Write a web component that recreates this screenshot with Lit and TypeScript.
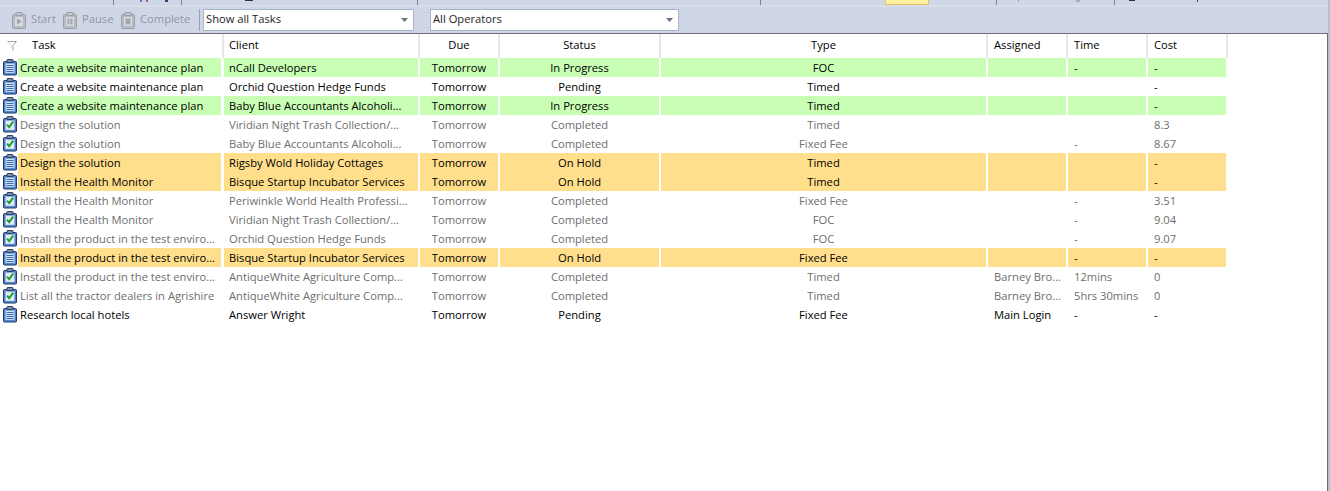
import { LitElement, html, css, svg } from "lit";
import { customElement } from "lit/decorators.js";

type Row = [string, string, string, string, string, string, string, string, string];
// tone, task, client, due, status, type, assigned, time, cost
const rows: Row[] = [
  ["g", "Create a website maintenance plan", "nCall Developers", "Tomorrow", "In Progress", "FOC", "", "-", "-"],
  ["n", "Create a website maintenance plan", "Orchid Question Hedge Funds", "Tomorrow", "Pending", "Timed", "", "", "-"],
  ["g", "Create a website maintenance plan", "Baby Blue Accountants Alcoholi...", "Tomorrow", "In Progress", "Timed", "", "", "-"],
  ["d", "Design the solution", "Viridian Night Trash Collection/...", "Tomorrow", "Completed", "Timed", "", "", "8.3"],
  ["d", "Design the solution", "Baby Blue Accountants Alcoholi...", "Tomorrow", "Completed", "Fixed Fee", "", "-", "8.67"],
  ["o", "Design the solution", "Rigsby Wold Holiday Cottages", "Tomorrow", "On Hold", "Timed", "", "", "-"],
  ["o", "Install the Health Monitor", "Bisque Startup Incubator Services", "Tomorrow", "On Hold", "Timed", "", "", "-"],
  ["d", "Install the Health Monitor", "Periwinkle World Health Professi...", "Tomorrow", "Completed", "Fixed Fee", "", "-", "3.51"],
  ["d", "Install the Health Monitor", "Viridian Night Trash Collection/...", "Tomorrow", "Completed", "FOC", "", "-", "9.04"],
  ["d", "Install the product in the test enviro...", "Orchid Question Hedge Funds", "Tomorrow", "Completed", "FOC", "", "-", "9.07"],
  ["o", "Install the product in the test enviro...", "Bisque Startup Incubator Services", "Tomorrow", "On Hold", "Fixed Fee", "", "-", "-"],
  ["d", "Install the product in the test enviro...", "AntiqueWhite Agriculture Comp...", "Tomorrow", "Completed", "Timed", "Barney Bro...", "12mins", "0"],
  ["d", "List all the tractor dealers in Agrishire", "AntiqueWhite Agriculture Comp...", "Tomorrow", "Completed", "Timed", "Barney Bro...", "5hrs 30mins", "0"],
  ["n", "Research local hotels", "Answer Wright", "Tomorrow", "Pending", "Fixed Fee", "Main Login", "-", "-"],
];

const clipboard = (done: boolean) => svg`
  <svg class="ico" width="15" height="17" viewBox="0 0 15 17">
    <rect x="0.5" y="2.5" width="13" height="13.5" rx="1" fill="#4f80c4" stroke="#1d3b73"/>
    <rect x="2.5" y="4.5" width="9" height="9.5" fill="${done ? "#e4edf7" : "#d3e2f6"}" stroke="#88a9d8" stroke-width="0.5"/>
    <rect x="4" y="0.5" width="6" height="3" rx="0.5" fill="#7f8ea6" stroke="#2a3f66"/>
    ${done
      ? svg`<path d="M4 8.6 L6.2 11.2 L10.2 5.6" fill="none" stroke="#1f9f2c" stroke-width="2"/>`
      : svg`<path d="M3.5 6.5H10.5M3.5 8.5H10.5M3.5 10.5H10.5M3.5 12.5H10.5" stroke="#3a6cb5" stroke-width="1"/>`}
  </svg>`;

const toolIcon = (kind: string) => svg`
  <svg width="15" height="17" viewBox="0 0 15 17">
    <rect x="0.5" y="2.5" width="13" height="14" rx="1" fill="#b9bdc5" stroke="#9a9fa8"/>
    <rect x="2.5" y="4.5" width="9" height="10" fill="#d8dbe2" stroke="#a7acb5" stroke-width="0.6"/>
    <rect x="4" y="0.5" width="6" height="3" fill="#c2c6ce" stroke="#9a9fa8"/>
    ${kind === "start" ? svg`<path d="M5 6.5 L9.8 9.5 L5 12.5Z" fill="#a0a5ae"/>` : ""}
    ${kind === "pause" ? svg`<path d="M4.5 6.5h2v6h-2zM7.5 6.5h2v6h-2z" fill="#a0a5ae"/>` : ""}
    ${kind === "stop" ? svg`<rect x="4.5" y="6.5" width="5" height="6" fill="#a0a5ae"/>` : ""}
  </svg>`;

const caret = svg`<svg class="caret" width="7" height="4" viewBox="0 0 7 4"><path d="M0 0H7L3.5 4Z" fill="#6b7486"/></svg>`;

@customElement("app-root")
export class AppRoot extends LitElement {
  static styles = css`
    :host { display: flex; width: 1330px; height: 491px; overflow: hidden; background: #fff;
      font-family: "Open Sans", "Noto Sans", sans-serif; font-size: 11.2px; color: #000; }
    .main { width: 1328px; flex: none; display: flex; flex-direction: column; }
    .edge { width: 2px; flex: none; background: #b6bed1; }
    .tabs { display: flex; height: 5px; background: #cfd6e5; }
    .tab { box-sizing: border-box; border-right: 1px solid #7b8290; display: flex; align-items: flex-start; }
    .tab.last { border-right: 0; flex: 1; }
    .t1 { width: 114px; } .t2 { width: 68px; } .t3 { width: 236px; } .t4 { width: 343px; }
    .active { width: 44px; height: 5px; margin-left: 124px; box-sizing: border-box;
      background: #fff0a0; border: 1px solid #e5c365; border-top: 0; }
    .t5 { width: 68px; } .t6 { width: 118px; }
    .mark { height: 1px; background: #27324a; flex: none; }
    .m1 { margin-left: 26px; width: 2px; background: #5a7ac0; height: 2px; }
    .m2 { margin-left: 4px; width: 2px; background: #a06a70; height: 2px; }
    .m3 { margin-left: 17px; width: 3px; height: 2px; background: #33406a; }
    .m4 { margin-left: 63px; width: 8px; }
    .m5 { margin-left: 21px; width: 1px; height: 2px; background: #a89cc0; }
    .m6 { margin-left: 57px; width: 4px; height: 2px; background: #a8adb8; }
    .m7 { margin-left: 14px; width: 6px; }
    .m8 { margin-left: 62px; width: 1px; height: 2px; background: #5a3a80; }
    .strip { height: 2px; background: #d7dde9; }
    .toolbar { height: 26px; box-sizing: border-box; background: #cfd6e5; display: flex; align-items: center; color: #8e97aa; line-height: 16px; }
    .grip { width: 5px; height: 17px; margin-right: 7px; opacity: 0.7;
      background-image: radial-gradient(#b0b8ca 0.6px, transparent 0.7px); background-size: 2px 2px; }
    .btn { display: flex; align-items: center; gap: 4px; flex: none; box-sizing: border-box; }
    .btn span { padding-bottom: 2px; }
    .b1 { width: 51px; } .b2 { width: 58px; } .b3 { width: 78px; }
    .sep { width: 1px; height: 22px; background: #98a1b3; margin-right: 3px; flex: none; }
    .select { box-sizing: border-box; height: 22px; background: #fff; border: 1px solid #a9b3c8; color: #1e1e1e;
      display: flex; align-items: center; justify-content: space-between; padding: 0 5px 0 2px; flex: none; }
    .select span { padding-bottom: 2px; }
    .s1 { width: 211px; margin-right: 16px; }
    .s2 { width: 249px; }
    .rule { height: 1px; background: #6d6d72; }
    .body { flex: 1; background: #fff; border-right: 1px solid #6d6d72; }
    .grid { display: grid; grid-template-columns: 18px 206px 196px 80px 161px 327px 80px 80px 80px; width: 1228px; }
    .head { height: 24px; align-items: stretch; line-height: 16px; }
    .hc { border-right: 2px solid #e6e6e6; display: flex; align-items: center; padding-left: 5px; box-sizing: border-box; padding-bottom: 2px; }
    .hc.c { justify-content: center; padding-left: 0; }
    .hc.a { padding-left: 6px; }
    .hfirst { grid-column: 1 / span 2; padding-left: 7px; gap: 15px; }
    .funnel { margin-top: 2px; }
    .row { height: 19px; }
    .cell { margin-right: 2px; line-height: 19px; padding-left: 5px; white-space: nowrap; overflow: hidden; }
    .cell.c { text-align: center; padding-left: 0; }
    .cell.a { padding-left: 6px; }
    .task { margin-right: 3px; padding-left: 2px; }
    .icell { display: flex; align-items: center; padding-left: 3px; }
    .ico { display: block; }
    .g .cell { background: #c8ffb4; }
    .o .cell { background: #ffdf8c; }
    .d .cell { color: #6e6e6e; }
  `;

  render() {
    return html`
      <div class="main">
        <div class="tabs">
          <div class="tab t1"></div>
          <div class="tab t2"><i class="mark m1"></i><i class="mark m2"></i><i class="mark m3"></i></div>
          <div class="tab t3"><i class="mark m4"></i></div>
          <div class="tab t4"></div>
          <div class="active"></div>
          <div class="tab t5"></div>
          <div class="tab t6"><i class="mark m5"></i><i class="mark m6"></i></div>
          <div class="tab last"><i class="mark m7"></i><i class="mark m8"></i></div>
        </div>
        <div class="strip"></div>
        <div class="toolbar">
          <div class="grip"></div>
          <div class="btn b1">${toolIcon("start")}<span>Start</span></div>
          <div class="btn b2">${toolIcon("pause")}<span>Pause</span></div>
          <div class="btn b3">${toolIcon("stop")}<span>Complete</span></div>
          <div class="sep"></div>
          <div class="select s1"><span>Show all Tasks</span>${caret}</div>
          <div class="select s2"><span>All Operators</span>${caret}</div>
        </div>
        <div class="rule"></div>
        <div class="body">
          <div class="grid head">
            <div class="hc hfirst">
              <svg class="funnel" width="10" height="10" viewBox="0 0 10 10"><path d="M0.5 0.5H9.5L6 4.5V9.5" fill="none" stroke="#8a8a8a" stroke-width="0.8"/><path d="M0.5 0.5L4 4.5V7" fill="none" stroke="#cfcfcf" stroke-width="0.8"/></svg>
              <span>Task</span>
            </div>
            <div class="hc">Client</div>
            <div class="hc c">Due</div>
            <div class="hc c">Status</div>
            <div class="hc c">Type</div>
            <div class="hc a">Assigned</div>
            <div class="hc a">Time</div>
            <div class="hc a">Cost</div>
          </div>
          ${rows.map(
            (r) => html`
              <div class="grid row ${r[0]}">
                <div class="icell">${clipboard(r[0] === "d")}</div>
                <div class="cell task">${r[1]}</div>
                <div class="cell">${r[2]}</div>
                <div class="cell c">${r[3]}</div>
                <div class="cell c">${r[4]}</div>
                <div class="cell c">${r[5]}</div>
                <div class="cell a">${r[6]}</div>
                <div class="cell a">${r[7]}</div>
                <div class="cell a">${r[8]}</div>
              </div>
            `
          )}
        </div>
      </div>
      <div class="edge"></div>
    `;
  }
}
